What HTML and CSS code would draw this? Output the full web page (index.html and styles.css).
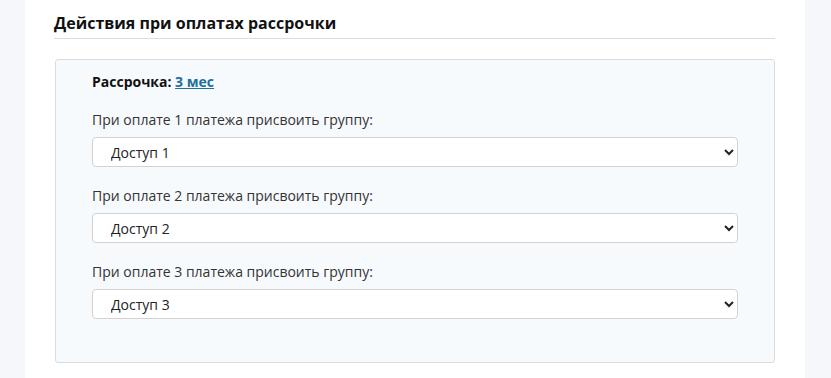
FILE: index.html
```html
<!DOCTYPE html>
<html lang="ru">
<head>
  <meta charset="UTF-8">
  <title>Действия при оплатах рассрочки</title>
  <link rel="stylesheet" href="styles.css">
</head>
<body>
  <div class="page">
    <h2 class="section-title">Действия при оплатах рассрочки</h2>

    <div class="plan-box">
      <div class="plan-name">Рассрочка: <a href="#">3 мес</a></div>

      <div class="form-group">
        <label for="group1">При оплате 1 платежа присвоить группу:</label>
        <select id="group1">
          <option>Доступ 1</option>
        </select>
      </div>

      <div class="form-group">
        <label for="group2">При оплате 2 платежа присвоить группу:</label>
        <select id="group2">
          <option>Доступ 2</option>
        </select>
      </div>

      <div class="form-group">
        <label for="group3">При оплате 3 платежа присвоить группу:</label>
        <select id="group3">
          <option>Доступ 3</option>
        </select>
      </div>
    </div>
  </div>
</body>
</html>
```

FILE: styles.css
```css
* {
  box-sizing: border-box;
}

body {
  margin: 0;
  background: #f6f7fb;
  font-family: 'Open Sans', sans-serif;
  color: #222;
}

.page {
  width: 780px;
  margin-left: 25px;
  min-height: 378px;
  background: #fff;
  padding: 12px 30px 0 29px;
}

.section-title {
  margin: 0 0 20px;
  padding-bottom: 4px;
  font-size: 16px;
  line-height: 22px;
  font-weight: 700;
  color: #111;
  border-bottom: 1px solid #dcd9ea;
}

.plan-box {
  margin-left: 1px;
  background: #f7fafd;
  border: 1px solid #dcdcdc;
  border-radius: 3px;
  padding: 12px 36px 43px;
}

.plan-name {
  font-size: 14px;
  line-height: 20px;
  font-weight: 700;
  color: #111;
  margin-bottom: 18px;
}

.plan-name a {
  color: #1d6f9d;
}

.form-group {
  margin-bottom: 19px;
}

.form-group:last-child {
  margin-bottom: 0;
}

.form-group label {
  display: block;
  font-size: 14px;
  line-height: 20px;
  color: #333;
  margin-bottom: 7px;
}

select {
  display: block;
  width: 100%;
  height: 30px;
  padding: 0 12px 0 14px;
  font-family: 'Open Sans', sans-serif;
  font-size: 14px;
  color: #222;
  background: #fff;
  border: 1px solid #d2d2d2;
  border-radius: 4px;
}
```
